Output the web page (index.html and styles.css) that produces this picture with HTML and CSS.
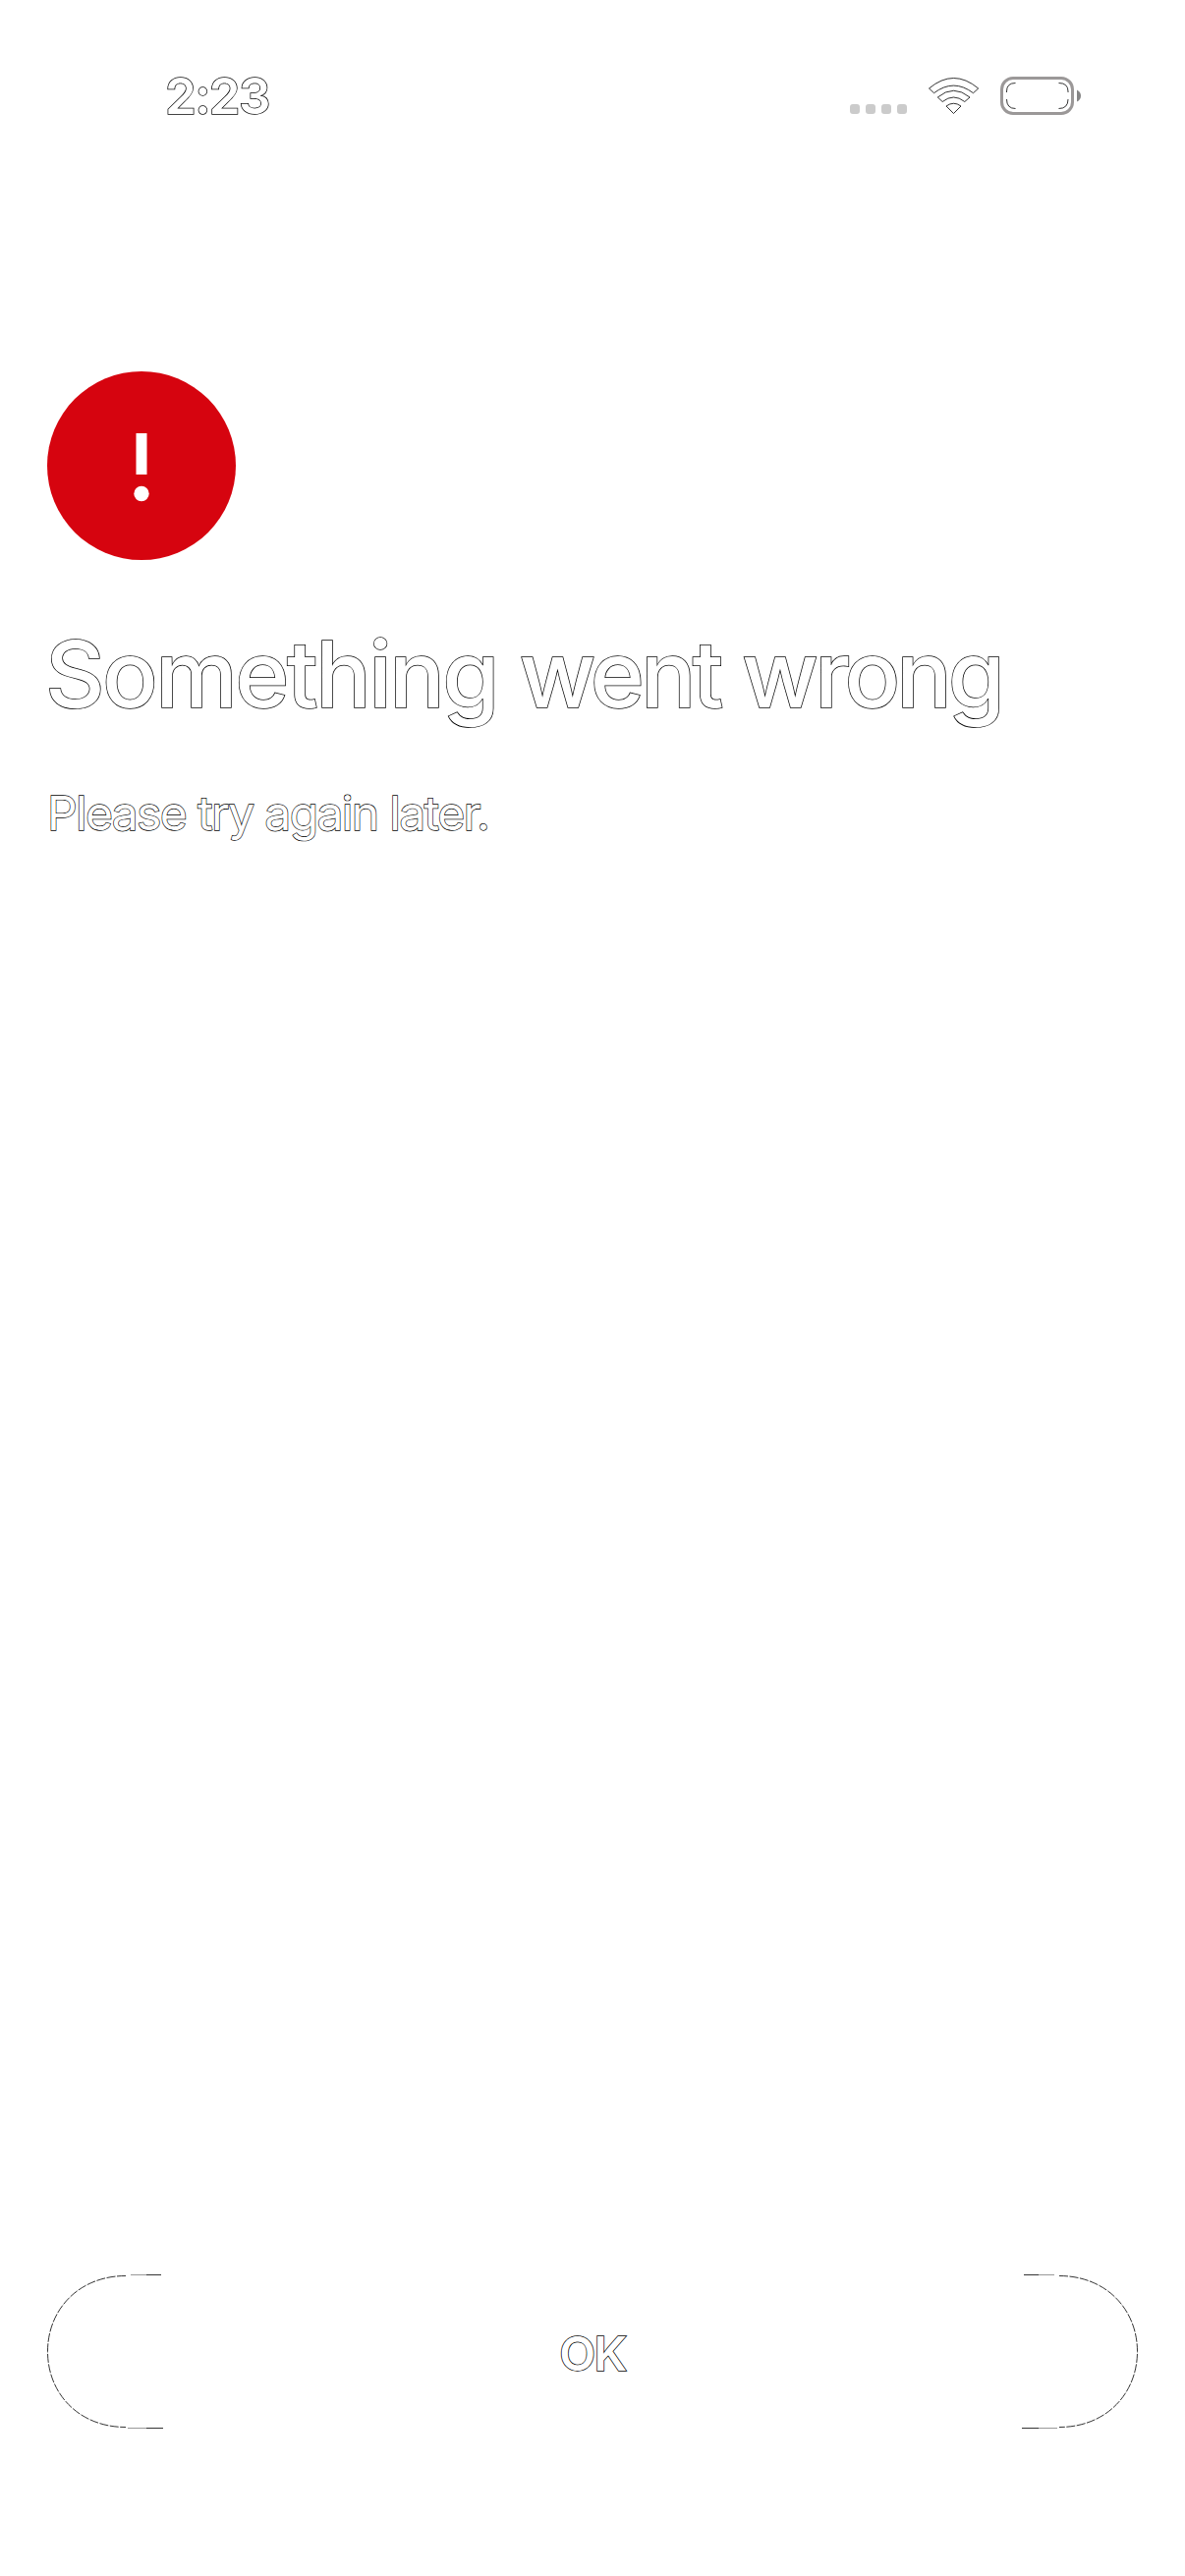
FILE: index.html
```
<!DOCTYPE html>
<html lang="en">
<head>
<meta charset="utf-8">
<title>Something went wrong</title>
<link rel="stylesheet" href="styles.css">
</head>
<body>
<div class="screen">
  <header class="status">
    <span class="time outlined">2:23</span>
    <svg class="indicators" viewBox="0 0 240 48" width="240" height="48" aria-hidden="true">
      <g fill="#cbcbcb">
        <rect x="5" y="30" width="10" height="10" rx="3"/><rect x="21" y="30" width="10" height="10" rx="3"/>
        <rect x="37" y="30" width="10" height="10" rx="3"/><rect x="53" y="30" width="10" height="10" rx="3"/>
      </g>
      <g class="hairline">
        <path d="M85.500 14Q110.500-7 135.700 14L130.500 18.700Q110.500 3.500 90.500 18.700Z"/>
        <path d="M94.300 23Q110.500 9.500 127 23L121.800 27.500Q110.500 18.500 99.200 27.500Z"/>
        <path d="M103 32Q110.500 26.500 118 32L110.500 39.500Z"/>
        <path d="M164.500 18v-1q0-8.500 9-8.500M217.500 8.500q9.500 0 9.500 8.500v1M164.500 25q0 9.500 9 9.500M217.500 34.500q9.500 0 9.500-9.500"/>
      </g>
      <rect x="159.500" y="3.500" width="72" height="36" rx="11.500" fill="none" stroke="#9b9898" stroke-width="3"/>
      <path d="M236 15.500q4 2 4 6t-4 6Z" fill="#858585"/>
    </svg>
  </header>
  <main class="message">
    <svg class="alert" viewBox="0 0 192 192" width="192" height="192" aria-hidden="true">
      <circle cx="96" cy="96" r="96" fill="#d6040f"/>
      <path d="M90.500 63h11v42h-11z" fill="#fff"/>
      <circle cx="96" cy="124.500" r="7.700" fill="#fff"/>
    </svg>
    <h1 class="title outlined">Something <span class="tight">went</span> <span class="tight">wrong</span></h1>
    <p class="detail outlined">Please try again later.</p>
  </main>
  <button class="ok" type="button">
    <svg class="cap" viewBox="0 0 120 157" width="120" height="157" aria-hidden="true">
      <path d="M80 1.500C32 1.500.500 36 .500 78.500S32 155.500 80 155.500" stroke-dasharray="9 1.500"/>
      <path d="M85 .500H101M82 156.500H101" opacity=".5"/><path d="M101 .500H116M101 156.500H118"/>
    </svg>
    <span class="ok-label outlined">OK</span>
    <svg class="cap cap-end" viewBox="0 0 120 157" width="120" height="157" aria-hidden="true">
      <path d="M80 1.500C32 1.500.500 36 .500 78.500S32 155.500 80 155.500" stroke-dasharray="9 1.500"/>
      <path d="M85 .500H101M82 156.500H101" opacity=".5"/><path d="M101 .500H116M101 156.500H118"/>
    </svg>
  </button>
</div>
</body>
</html>
```
FILE: styles.css
```
* { box-sizing: border-box; }
body { margin: 0; background: #fff; }
.screen {
  display: flex;
  flex-direction: column;
  height: 2622px;
  padding: 0 48px 150px;
  background: #fff;
  font-family: Inter, "Liberation Sans", sans-serif;
}
.outlined {
  color: #fff;
  -webkit-text-stroke: 1.5px #000;
  paint-order: stroke fill;
}
.status {
  display: flex;
  justify-content: space-between;
  align-items: flex-start;
  height: 378px;
  padding: 76px 58px 0 120px;
}
.time {
  font-size: 51px;
  line-height: 44px;
  font-weight: 600;
  letter-spacing: -1.6px;
}
.hairline { fill: none; stroke: #000; stroke-width: .8; }
.message { flex: 1; }
.alert { display: block; }
.title {
  margin: 60px 0 0 -2px;
  font-size: 94px;
  line-height: 112px;
  font-weight: 500;
  letter-spacing: -2.6px;
  white-space: nowrap;
}
.tight { letter-spacing: -4px; }
.detail {
  margin: 50px 0 0;
  font-size: 48px;
  line-height: 72px;
  font-weight: 400;
  letter-spacing: -1.65px;
  -webkit-text-stroke-width: 1.3px;
}
.ok {
  display: flex;
  align-items: center;
  justify-content: space-between;
  height: 157px;
  padding: 0;
  border: 0;
  background: none;
  font-family: inherit;
}
.cap { fill: none; stroke: #000; stroke-width: .8; }
.cap-end { transform: scaleX(-1); }
.ok-label {
  padding-top: 3px;
  font-size: 48px;
  font-weight: 600;
  letter-spacing: -1.5px;
}
```
